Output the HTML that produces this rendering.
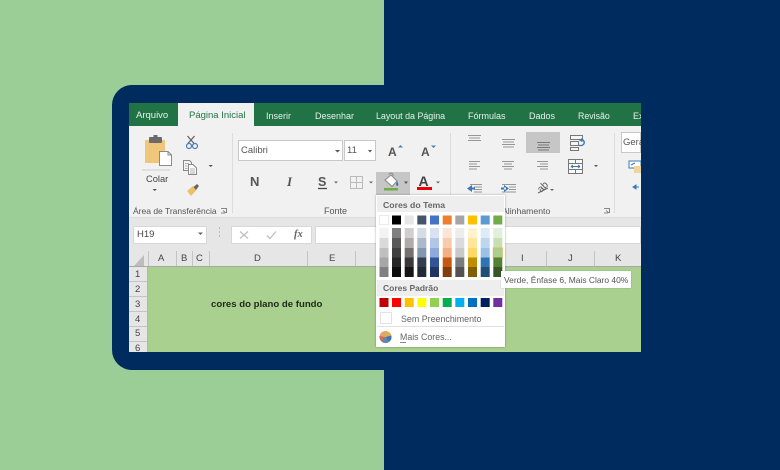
<!DOCTYPE html>
<html lang="pt">
<head>
<meta charset="utf-8">
<style>
html,body{margin:0;padding:0;width:780px;height:470px;overflow:hidden;background:#9bcd96;font-family:"Liberation Sans",sans-serif}
#r{position:absolute;left:384px;top:0;width:396px;height:470px;background:#002b5f}
#c{position:absolute;left:112px;top:85px;width:300px;height:285px;background:#002b5f;border-radius:20px 0 0 20px}
#s{position:absolute;left:129px;top:103px;width:512px;height:249px;overflow:hidden;background:#f1f1f1}
#s div,#s span.t{position:absolute}
.t{position:absolute;white-space:nowrap;line-height:12px;color:#444;filter:blur(.25px)}
svg{position:absolute;left:0;top:0;filter:blur(.3px)}
</style>
</head>
<body>
<div id="r"></div>
<div id="c"></div>
<div id="s">
  <div style="left:0;top:0;width:512px;height:23px;background:#217346"></div>
  <div style="left:49px;top:0;width:76px;height:23px;background:#f1f1f1"></div>
  <div style="left:0;top:114px;width:512px;height:34px;background:#e6e6e6"></div>
  <div style="left:0;top:148px;width:512px;height:17px;background:#e6e6e6"></div>
  <div style="left:19px;top:164px;width:493px;height:85px;background:#a9d08e"></div>
  <div style="left:0;top:164px;width:19px;height:85px;background:#e6e6e6"></div>
  <div style="left:4px;top:123px;width:74px;height:18px;background:#fff;border:1px solid #d8d8d8;box-sizing:border-box"></div>
  <div style="left:102px;top:123px;width:81px;height:18px;background:#fff;border:1px solid #d8d8d8;box-sizing:border-box"></div>
  <div style="left:186px;top:123px;width:326px;height:18px;background:#fff;border:1px solid #d8d8d8;box-sizing:border-box"></div>
  <div style="left:109px;top:37px;width:105px;height:21px;background:#fff;border:1px solid #c8c8c8;box-sizing:border-box"></div>
  <div style="left:215px;top:37px;width:32px;height:21px;background:#fff;border:1px solid #c8c8c8;box-sizing:border-box"></div>
  <div style="left:492px;top:29px;width:20px;height:21px;background:#fff;border:1px solid #c8c8c8;box-sizing:border-box"></div>
  <div style="left:247px;top:69px;width:34px;height:23px;background:#c6c6c6"></div>
  <div style="left:397px;top:29px;width:34px;height:21px;background:#c6c6c6"></div>

  <svg width="512" height="249" viewBox="0 0 512 249">
    <g stroke="#dcdcdc" fill="none">
      <path d="M103.500 30V110M321.500 30V110M485.500 30V110M0 114.500H512"/>
      <path d="M13 67H41" stroke="#d0d0d0"/>
    </g>
    <!-- paste -->
    <rect x="16" y="37" width="20" height="23" fill="#f0c77a"/>
    <rect x="20" y="34" width="13" height="6" rx="1" fill="#6a6a6a"/>
    <rect x="24.500" y="32" width="4" height="3" fill="#6a6a6a"/>
    <path d="M30.500 48.500H39L42.500 52V62.500H30.500Z" fill="#fff" stroke="#8a8a8a"/>
    <path d="M39 48.500V52H42.500" fill="none" stroke="#8a8a8a"/>
    <path d="M23.500 86H28L25.700 88Z" fill="#555"/>
    <!-- scissors -->
    <path d="M58.500 33L65.500 41M65.500 33L58.500 41" stroke="#666" stroke-width="1.300" fill="none"/>
    <circle cx="60" cy="43" r="2.500" fill="none" stroke="#4a7fb5" stroke-width="1.200"/>
    <circle cx="66" cy="43" r="2.500" fill="none" stroke="#4a7fb5" stroke-width="1.200"/>
    <!-- copy -->
    <path d="M54.500 57.500H60.500L62.500 59.500V67.500H54.500Z" fill="#f4f4f4" stroke="#888"/>
    <path d="M59.500 61.500H64L67.500 65V71.500H59.500Z" fill="#fff" stroke="#888"/>
    <path d="M56 60.500H60M56 63H58.500M56 65.500H58.500M61 66H66M61 68H66M61 70H66" stroke="#999" stroke-width=".8"/>
    <path d="M79.500 62H84L81.700 64Z" fill="#555"/>
    <!-- brush -->
    <path d="M58 88L64 83L67.500 87L62 93Z" fill="#ecc06b"/>
    <path d="M64.500 84L68 81L70 83L67 87Z" fill="#666"/>
    <!-- dialog launchers -->
    <path d="M92 105.500H97.500V110M92 110H96M94 107.500L97 110" stroke="#666" stroke-width=".8" fill="none"/>
    <path d="M475 105.500H480.500V110M475 110H479M477 107.500L480 110" stroke="#666" stroke-width=".8" fill="none"/>
    <!-- combo arrows -->
    <path d="M206 47H211L208.500 49.500ZM239 47H243L241 49.500Z" fill="#555"/>
    <!-- A grow/shrink -->
    <text x="259" y="53" font-family="Liberation Sans" font-size="12" font-weight="bold" fill="#555">A</text>
    <path d="M269 44.500L271.500 42L274 44.500Z" fill="#4a7fb5"/>
    <text x="292" y="53" font-family="Liberation Sans" font-size="12" font-weight="bold" fill="#555">A</text>
    <path d="M302 42.500L304.500 45L307 42.500Z" fill="#4a7fb5"/>
    <!-- underline, border -->
    <path d="M189 85.500H198" stroke="#444" stroke-width="1.300"/>
    <path d="M205 78.500H209L207 80.500ZM240 78.500H244L242 80.500Z" fill="#666"/>
    <path d="M221.500 73.500H233.500V85.500H221.500ZM227.500 73.500V85.500M221.500 79.500H233.500" stroke="#bbb" fill="none"/>
    <!-- fill bucket -->
    <path d="M256 77L262 72L268 78L263 83.500Z" fill="#fff" stroke="#888"/>
    <path d="M260 71.500A2 2 0 0 1 264 73" fill="none" stroke="#888"/>
    <path d="M268 78Q270 81 269 83Q267 83 267 81Z" fill="#3f78b3"/>
    <rect x="255" y="85" width="14" height="2.500" fill="#70ad47"/>
    <path d="M275 78.500H279L277 81Z" fill="#555"/>
    <!-- font colour -->
    <text x="289.500" y="83" font-family="Liberation Sans" font-size="14" font-weight="bold" fill="#444">A</text>
    <rect x="288" y="84" width="15" height="3" fill="#e00"/>
    <path d="M307 78.500H311L309 80.500Z" fill="#666"/>
    <!-- alignment -->
    <g stroke="#969696" stroke-width="1.100" fill="none">
      <path d="M339 32.500H352M340 35H351M339 37.500H352"/>
      <path d="M373 36.500H386M374 39H385M373 41.500H386M374 44H385"/>
      <path d="M408 39.500H421M409 42H420M408 44.500H421M409 47H420" stroke="#777"/>
      <path d="M340 58.500H351M340 61H348M340 63.500H351M340 66H348"/>
      <path d="M373 58.500H385M375 61H383M373 63.500H385M375 66H383"/>
      <path d="M408 58.500H419M411 61H419M408 63.500H419M411 66H419"/>
      <path d="M341 81.500H353M345 84H353M345 86.500H353M345 89H353"/>
      <path d="M373 81.500H387M380 84H387M380 86.500H387M373 89H387"/>
    </g>
    <path d="M338 85.500L343 82V89Z M341 84.500H346V86.500H341Z" fill="#3b78b8"/>
    <path d="M380 85.500L375 82V89Z M372 84.500H377V86.500H372Z" fill="#3b78b8"/>
    <!-- orientation -->
    <text x="0" y="0" font-family="Liberation Sans" font-size="10" fill="#555" transform="translate(412,90) rotate(-45)">ab</text>
    <path d="M409 90L419 85" stroke="#666" stroke-width="1"/>
    <path d="M421 86H425L423 88Z" fill="#666"/>
    <!-- wrap text -->
    <path d="M441.500 32.500H453.500V36.500H441.500ZM441.500 38.500H449.500V42.500H441.500ZM441.500 44.500H449.500V47.500H441.500Z" fill="#f5f5f5" stroke="#777"/>
    <path d="M450 42.500H453Q457 40 454 37H452M453.500 35.500L451 37L453.500 38.500" fill="none" stroke="#3b78b8" stroke-width="1.300"/>
    <!-- merge -->
    <path d="M439.500 56.500H453.500V70.500H439.500ZM439.500 60.500H453.500M439.500 66.500H453.500M446.500 56.500V60.500M446.500 66.500V70.500" fill="#fafafa" stroke="#777"/>
    <path d="M442 63.500H451M442 63.500L444 62M442 63.500L444 65M451 63.500L449 62M451 63.500L449 65" stroke="#3b78b8" fill="none"/>
    <path d="M465 62H469L467 64Z" fill="#555"/>
    <!-- number -->
    <rect x="500" y="58" width="12" height="7" fill="#fff" stroke="#3b78b8"/>
    <rect x="505" y="63" width="7" height="7" fill="#f0d59a"/>
    <path d="M502 62L506 60" stroke="#3b78b8"/>
    <path d="M504 84L507 82V86ZM506 84H510" fill="#3b78b8" stroke="#3b78b8"/>
    <!-- formula bar -->
    <path d="M69 129.500H74L71.500 132Z" fill="#666"/>
    <path d="M90.500 124V126M90.500 128V130M90.500 132V134" stroke="#bbb"/>
    <path d="M111 128.500L119 135.500M119 128.500L111 135.500" stroke="#c0c0c0" stroke-width="1.300"/>
    <path d="M138 132.500L141 135.500L147 128.500" stroke="#c0c0c0" stroke-width="1.300" fill="none"/>
    <!-- headers -->
    <g stroke="#c4c4c4">
      <path d="M19.500 148V164M47.500 148V164M63.500 148V164M80.500 148V164M178.500 148V164M226.500 148V164M373.500 148V164M417.500 148V164M465.500 148V164"/>
      <path d="M0 163.500H512" stroke="#a8a8a8"/>
      <path d="M0 178.500H19M0 193.500H19M0 208.500H19M0 223.500H19M0 238.500H19"/>
      <path d="M18.500 164V249" stroke="#b4b4b4"/>
    </g>
    <path d="M15 152V163H5Z" fill="#bdbdbd"/>
  </svg>

  <span class="t" style="left:7px;top:7px;font-size:9.500px;color:#e6f2ea">Arquivo</span>
  <span class="t" style="left:60px;top:7px;font-size:9.500px;color:#217346">Página Inicial</span>
  <span class="t" style="left:137px;top:7px;font-size:9px;color:#e6f2ea">Inserir</span>
  <span class="t" style="left:186px;top:7px;font-size:9px;color:#e6f2ea">Desenhar</span>
  <span class="t" style="left:247px;top:7px;font-size:8.900px;color:#e6f2ea">Layout da Página</span>
  <span class="t" style="left:339px;top:7px;font-size:9px;color:#e6f2ea">Fórmulas</span>
  <span class="t" style="left:400px;top:7px;font-size:9px;color:#e6f2ea">Dados</span>
  <span class="t" style="left:449px;top:7px;font-size:8.800px;color:#e6f2ea">Revisão</span>
  <span class="t" style="left:504px;top:7px;font-size:9px;color:#e6f2ea">Ex</span>

  <span class="t" style="left:17px;top:70px;font-size:9.300px">Colar</span>
  <span class="t" style="left:4px;top:102px;font-size:8.500px;color:#555">Área de Transferência</span>
  <span class="t" style="left:195px;top:102px;font-size:9px;color:#555">Fonte</span>
  <span class="t" style="left:373px;top:102px;font-size:8.700px;color:#555">Alinhamento</span>
  <span class="t" style="left:112px;top:42px;font-size:9.500px;color:#555">Calibri</span>
  <span class="t" style="left:218px;top:42px;font-size:9.500px;color:#555">11</span>
  <span class="t" style="left:494px;top:34px;font-size:9.500px;color:#555">Geral</span>
  <span class="t" style="left:121px;top:73px;font-size:13px;font-weight:bold;color:#555">N</span>
  <span class="t" style="left:158px;top:73px;font-size:13px;font-weight:bold;font-style:italic;font-family:'Liberation Serif',serif;color:#555">I</span>
  <span class="t" style="left:189px;top:73px;font-size:12.500px;font-weight:bold;color:#555">S</span>
  <span class="t" style="left:8px;top:126px;font-size:9.500px;color:#444">H19</span>
  <span class="t" style="left:165px;top:126px;font-size:10.500px;font-weight:bold;font-style:italic;font-family:'Liberation Serif',serif;color:#666">fx</span>

  <span class="t" style="left:29px;top:150px;font-size:9.500px">A</span>
  <span class="t" style="left:52px;top:150px;font-size:9.500px">B</span>
  <span class="t" style="left:67px;top:150px;font-size:9.500px">C</span>
  <span class="t" style="left:125px;top:150px;font-size:9.500px">D</span>
  <span class="t" style="left:200px;top:150px;font-size:9.500px">E</span>
  <span class="t" style="left:392px;top:150px;font-size:9.500px">I</span>
  <span class="t" style="left:439px;top:150px;font-size:9.500px">J</span>
  <span class="t" style="left:486px;top:150px;font-size:9.500px">K</span>

  <span class="t" style="left:6px;top:166px;font-size:9.500px">1</span>
  <span class="t" style="left:6px;top:181px;font-size:9.500px">2</span>
  <span class="t" style="left:6px;top:196px;font-size:9.500px">3</span>
  <span class="t" style="left:6px;top:211px;font-size:9.500px">4</span>
  <span class="t" style="left:6px;top:225px;font-size:9.500px">5</span>
  <span class="t" style="left:6px;top:240px;font-size:9.500px">6</span>

  <span class="t" style="left:82px;top:196px;font-size:9.600px;font-weight:bold;color:#1e2a1a">cores do plano de fundo</span>
</div>

<div style="position:absolute;left:376px;top:195px;width:129px;height:152px;background:#fff;box-shadow:0 0 2px rgba(0,0,0,.35)"></div>
<div style="position:absolute;left:377px;top:196px;width:127px;height:16px;background:#eeeeee"></div>
<div style="position:absolute;left:377px;top:280px;width:127px;height:16px;background:#eeeeee"></div>
<span class="t" style="left:383px;top:199px;font-size:8.700px;font-weight:bold;color:#666">Cores do Tema</span>
<span class="t" style="left:383px;top:282px;font-size:8.500px;font-weight:bold;color:#666">Cores Padrão</span>
<span class="t" style="left:401px;top:313px;font-size:8.900px;color:#666">Sem Preenchimento</span>
<span class="t" style="left:400px;top:331px;font-size:8.800px;color:#666">Mais Cores...</span>

<svg style="left:0;top:0" width="780" height="470" viewBox="0 0 780 470">
  <g>
    <rect x="379.500" y="215.500" width="9" height="9" fill="#fff" stroke="#ddd" stroke-width=".6"/>
    <rect x="392" y="215.500" width="9" height="9" fill="#000"/>
    <rect x="404.700" y="215.500" width="9" height="9" fill="#e7e6e6"/>
    <rect x="417.300" y="215.500" width="9" height="9" fill="#44546a"/>
    <rect x="430" y="215.500" width="9" height="9" fill="#4472c4"/>
    <rect x="442.700" y="215.500" width="9" height="9" fill="#ed7d31"/>
    <rect x="455.300" y="215.500" width="9" height="9" fill="#a5a5a5"/>
    <rect x="468" y="215.500" width="9" height="9" fill="#ffc000"/>
    <rect x="480.700" y="215.500" width="9" height="9" fill="#5b9bd5"/>
    <rect x="493.300" y="215.500" width="9" height="9" fill="#70ad47"/>
  </g>
  <g id="sh">
    <rect x="379.500" y="228" width="9" height="10" fill="#f2f2f2"/><rect x="379.500" y="238" width="9" height="10" fill="#d9d9d9"/><rect x="379.500" y="248" width="9" height="9.500" fill="#bfbfbf"/><rect x="379.500" y="257.500" width="9" height="9.500" fill="#a6a6a6"/><rect x="379.500" y="267" width="9" height="10" fill="#808080"/>
    <rect x="392" y="228" width="9" height="10" fill="#808080"/><rect x="392" y="238" width="9" height="10" fill="#595959"/><rect x="392" y="248" width="9" height="9.500" fill="#404040"/><rect x="392" y="257.500" width="9" height="9.500" fill="#262626"/><rect x="392" y="267" width="9" height="10" fill="#0d0d0d"/>
    <rect x="404.700" y="228" width="9" height="10" fill="#d0cece"/><rect x="404.700" y="238" width="9" height="10" fill="#aeabab"/><rect x="404.700" y="248" width="9" height="9.500" fill="#757171"/><rect x="404.700" y="257.500" width="9" height="9.500" fill="#3a3838"/><rect x="404.700" y="267" width="9" height="10" fill="#171616"/>
    <rect x="417.300" y="228" width="9" height="10" fill="#d6dce4"/><rect x="417.300" y="238" width="9" height="10" fill="#acb9ca"/><rect x="417.300" y="248" width="9" height="9.500" fill="#8497b0"/><rect x="417.300" y="257.500" width="9" height="9.500" fill="#333f4f"/><rect x="417.300" y="267" width="9" height="10" fill="#222b35"/>
    <rect x="430" y="228" width="9" height="10" fill="#d9e1f2"/><rect x="430" y="238" width="9" height="10" fill="#b4c6e7"/><rect x="430" y="248" width="9" height="9.500" fill="#8ea9db"/><rect x="430" y="257.500" width="9" height="9.500" fill="#305496"/><rect x="430" y="267" width="9" height="10" fill="#203764"/>
    <rect x="442.700" y="228" width="9" height="10" fill="#fce4d6"/><rect x="442.700" y="238" width="9" height="10" fill="#f8cbad"/><rect x="442.700" y="248" width="9" height="9.500" fill="#f4b084"/><rect x="442.700" y="257.500" width="9" height="9.500" fill="#c65911"/><rect x="442.700" y="267" width="9" height="10" fill="#833c0b"/>
    <rect x="455.300" y="228" width="9" height="10" fill="#ededed"/><rect x="455.300" y="238" width="9" height="10" fill="#dbdbdb"/><rect x="455.300" y="248" width="9" height="9.500" fill="#c9c9c9"/><rect x="455.300" y="257.500" width="9" height="9.500" fill="#7b7b7b"/><rect x="455.300" y="267" width="9" height="10" fill="#525252"/>
    <rect x="468" y="228" width="9" height="10" fill="#fff2cc"/><rect x="468" y="238" width="9" height="10" fill="#ffe699"/><rect x="468" y="248" width="9" height="9.500" fill="#ffd966"/><rect x="468" y="257.500" width="9" height="9.500" fill="#bf8f00"/><rect x="468" y="267" width="9" height="10" fill="#806000"/>
    <rect x="480.700" y="228" width="9" height="10" fill="#ddebf7"/><rect x="480.700" y="238" width="9" height="10" fill="#bdd7ee"/><rect x="480.700" y="248" width="9" height="9.500" fill="#9bc2e6"/><rect x="480.700" y="257.500" width="9" height="9.500" fill="#2f75b5"/><rect x="480.700" y="267" width="9" height="10" fill="#1f4e78"/>
    <rect x="493.300" y="228" width="9" height="10" fill="#e2efda"/><rect x="493.300" y="238" width="9" height="10" fill="#c6e0b4"/><rect x="493.300" y="248" width="9" height="9.500" fill="#a9d08e" stroke="#e2b659"/><rect x="493.300" y="257.500" width="9" height="9.500" fill="#548235"/><rect x="493.300" y="267" width="9" height="10" fill="#375623"/>
  </g>
  <g>
    <rect x="379.500" y="298" width="9" height="9" fill="#c00000"/>
    <rect x="392" y="298" width="9" height="9" fill="#ff0000"/>
    <rect x="404.700" y="298" width="9" height="9" fill="#ffc000"/>
    <rect x="417.300" y="298" width="9" height="9" fill="#ffff00"/>
    <rect x="430" y="298" width="9" height="9" fill="#92d050"/>
    <rect x="442.700" y="298" width="9" height="9" fill="#00b050"/>
    <rect x="455.300" y="298" width="9" height="9" fill="#00b0f0"/>
    <rect x="468" y="298" width="9" height="9" fill="#0070c0"/>
    <rect x="480.700" y="298" width="9" height="9" fill="#002060"/>
    <rect x="493.300" y="298" width="9" height="9" fill="#7030a0"/>
  </g>
  <rect x="380.500" y="312.500" width="11" height="11" fill="#fff" stroke="#e2e2e2"/>
  <path d="M377 326.500H504" stroke="#e0e0e0"/>
  <path d="M400 342.500H406" stroke="#666" stroke-width=".8"/>
  <circle cx="385.500" cy="337" r="6" fill="#e8a07a"/>
  <path d="M385.500 337L385.500 331A6 6 0 0 1 391.300 335.500Z" fill="#d9b44a"/>
  <path d="M385.500 337L391.300 335.500A6 6 0 0 1 389 342Z" fill="#3f78b3"/>
  <path d="M385.500 337L389 342A6 6 0 0 1 381 341Z" fill="#5f88b0"/>
  <path d="M385.500 337L381 341A6 6 0 0 1 379.500 336Z" fill="#d66c4a"/>
</svg>

<div style="position:absolute;left:501px;top:271px;width:130px;height:17px;background:#fff;box-shadow:0 0 1px rgba(0,0,0,.25)"></div>
<span class="t" style="left:504px;top:274px;font-size:8.450px;color:#555">Verde, Ênfase 6, Mais Claro 40%</span>
</body>
</html>
